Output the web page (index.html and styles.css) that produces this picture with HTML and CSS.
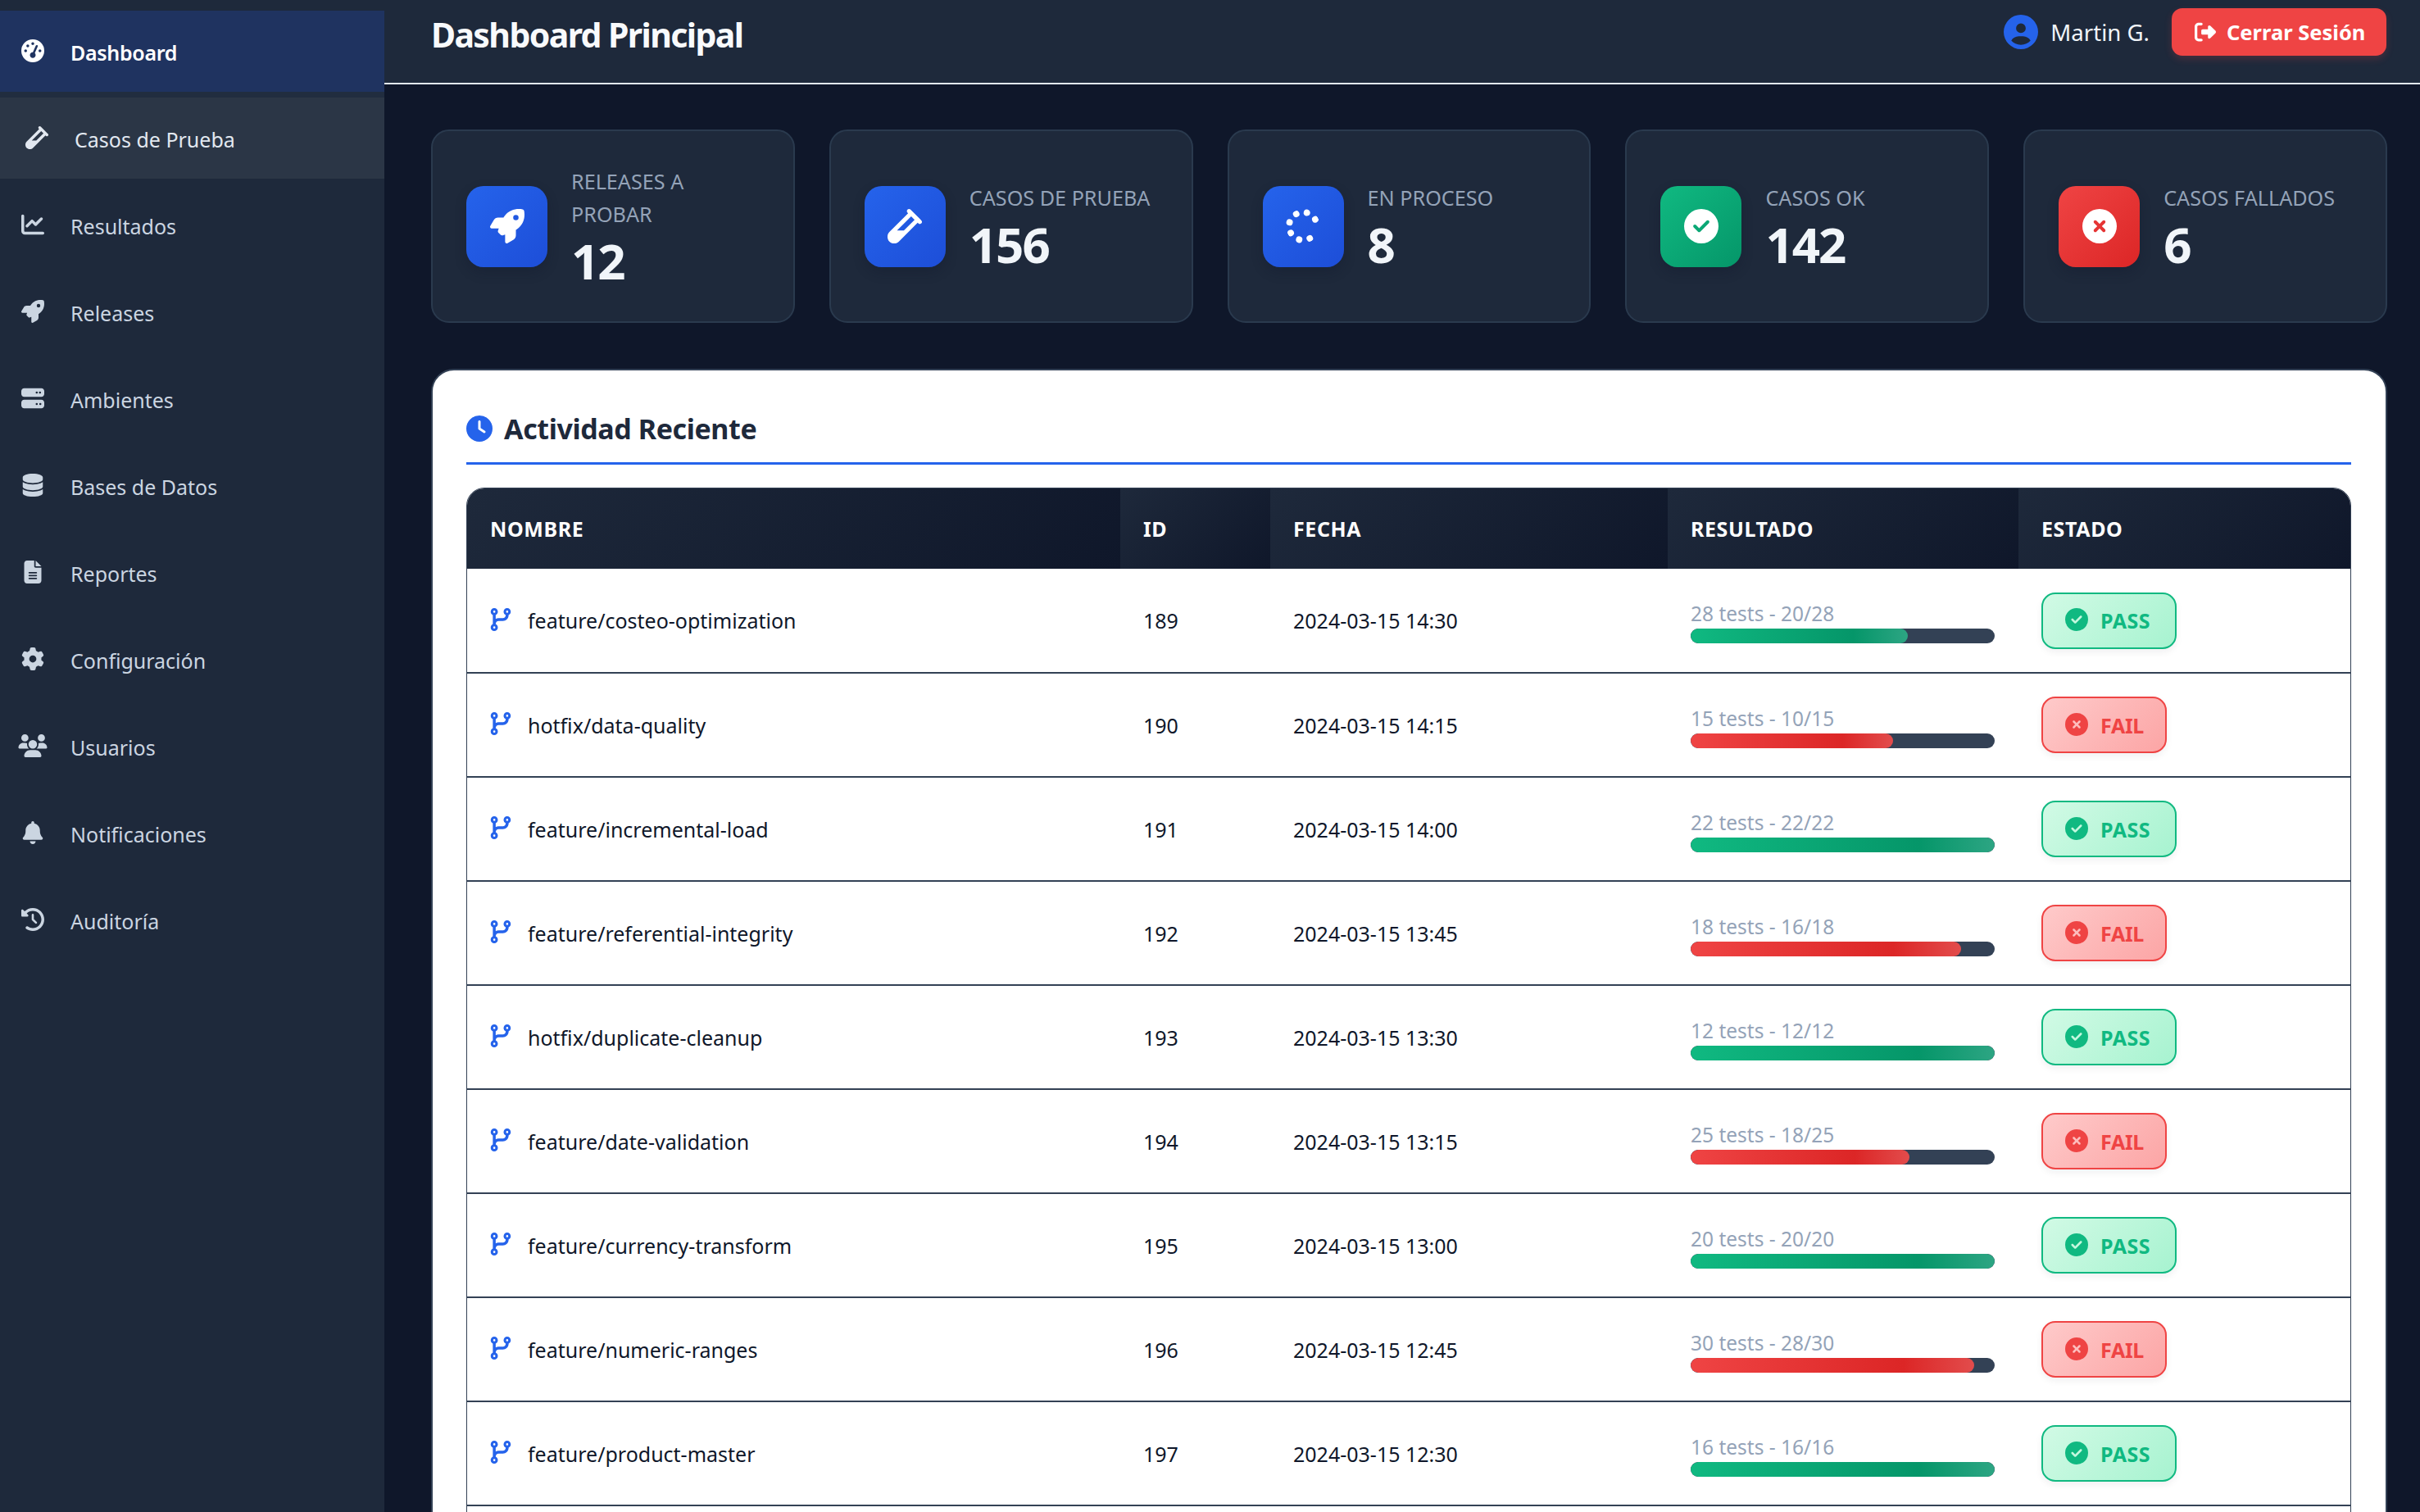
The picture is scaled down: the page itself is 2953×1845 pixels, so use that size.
FILE: index.html
```html
<!DOCTYPE html>
<html lang="es">
<head>
	<meta charset="utf-8">
	<title>Dashboard Principal</title>
	<link rel="stylesheet" href="styles.css">
</head>
<body>
	<svg class="sprite" xmlns="http://www.w3.org/2000/svg">
		<symbol id="i-gauge" viewBox="0 0 512 512"><path d="M0 256a256 256 0 1 1 512 0A256 256 0 1 1 0 256zM288 96a32 32 0 1 0 -64 0 32 32 0 1 0 64 0zM256 416c35.3 0 64-28.7 64-64c0-17.4-6.9-33.1-18.1-44.6L366 161.7c5.3-12.1-.2-26.3-12.3-31.6s-26.3 .2-31.6 12.3L257.9 288c-.6 0-1.3 0-1.9 0c-35.3 0-64 28.7-64 64s28.7 64 64 64zM176 144a32 32 0 1 0 -64 0 32 32 0 1 0 64 0zM96 288a32 32 0 1 0 0-64 32 32 0 1 0 0 64zm352-32a32 32 0 1 0 -64 0 32 32 0 1 0 64 0z"/></symbol>
		<symbol id="i-vial" viewBox="0 0 512 512"><path fill-rule="evenodd" d="M342.6 9.4c-12.5-12.5-32.8-12.5-45.3 0s-12.5 32.8 0 45.3l9.4 9.4L28.1 342.6C10.1 360.6 0 385 0 410.5V416c0 53 43 96 96 96h5.5c25.5 0 49.9-10.1 67.9-28.1L448 205.3l9.4 9.4c12.5 12.5 32.8 12.5 45.3 0s12.5-32.8 0-45.3l-16-16-144-144-16-16zM352 109.3L402.7 160l-160 160H141.3L352 109.3z"/></symbol>
		<symbol id="i-chart" viewBox="0 0 512 512"><path d="M64 64c0-17.7-14.3-32-32-32S0 46.3 0 64V400c0 44.2 35.8 80 80 80H480c17.7 0 32-14.3 32-32s-14.3-32-32-32H80c-8.8 0-16-7.2-16-16V64zm406.6 86.6c12.5-12.5 12.5-32.8 0-45.3s-32.8-12.5-45.3 0L320 210.7l-57.4-57.4c-12.5-12.5-32.8-12.5-45.3 0l-112 112c-12.5 12.5-12.5 32.8 0 45.3s32.8 12.5 45.3 0L240 221.3l57.4 57.4c12.5 12.5 32.8 12.5 45.3 0l128-128z"/></symbol>
		<symbol id="i-rocket" viewBox="0 0 512 512"><path d="M156.6 384.9L125.7 354c-8.5-8.5-11.5-20.8-7.7-32.2c3-8.9 7-20.5 11.8-33.8L24 288c-8.6 0-16.6-4.6-20.9-12.1s-4.2-16.7 .2-24.1l52.5-88.5c13-21.9 36.5-35.3 61.9-35.3l82.3 0c2.4-4 4.8-7.7 7.2-11.3C289.1-4.1 411.1-8.1 483.9 5.3c11.6 2.1 20.6 11.2 22.8 22.8c13.4 72.9 9.3 194.8-111.4 276.7c-3.5 2.4-7.3 4.8-11.3 7.2v82.3c0 25.4-13.4 49-35.3 61.9l-88.5 52.5c-7.4 4.4-16.6 4.5-24.1 .2s-12.1-12.2-12.1-20.9V380.8c-14.1 4.9-26.4 8.9-35.7 11.9c-11.2 3.6-23.4 .5-31.8-7.8zM384 168a40 40 0 1 0 0-80 40 40 0 1 0 0 80z"/></symbol>
		<symbol id="i-server" viewBox="0 0 512 512"><path d="M64 32C28.7 32 0 60.7 0 96v64c0 35.3 28.7 64 64 64H448c35.3 0 64-28.7 64-64V96c0-35.3-28.7-64-64-64H64zm280 72a24 24 0 1 1 0 48 24 24 0 1 1 0-48zm48 24a24 24 0 1 1 48 0 24 24 0 1 1 -48 0zM64 288c-35.3 0-64 28.7-64 64v64c0 35.3 28.7 64 64 64H448c35.3 0 64-28.7 64-64V352c0-35.3-28.7-64-64-64H64zm280 72a24 24 0 1 1 0 48 24 24 0 1 1 0-48zm56 24a24 24 0 1 1 48 0 24 24 0 1 1 -48 0z"/></symbol>
		<symbol id="i-database" viewBox="0 0 448 512"><path d="M448 80v48c0 44.2-100.3 80-224 80S0 172.2 0 128V80C0 35.8 100.3 0 224 0S448 35.8 448 80zM393.2 214.7c20.8-7.4 39.9-16.9 54.8-28.6V288c0 44.2-100.3 80-224 80S0 332.2 0 288V186.1c14.9 11.8 34 21.2 54.8 28.6C99.7 230.7 159.5 240 224 240s124.3-9.3 169.2-25.3zM0 346.1c14.9 11.8 34 21.2 54.8 28.6C99.7 390.7 159.5 400 224 400s124.3-9.3 169.2-25.3c20.8-7.4 39.9-16.9 54.8-28.6V432c0 44.2-100.3 80-224 80S0 476.2 0 432V346.1z"/></symbol>
		<symbol id="i-file" viewBox="0 0 384 512"><path d="M64 0C28.7 0 0 28.7 0 64V448c0 35.3 28.7 64 64 64H320c35.3 0 64-28.7 64-64V160H256c-17.7 0-32-14.3-32-32V0H64zM256 0V128H384L256 0zM112 256H272c8.8 0 16 7.2 16 16s-7.2 16-16 16H112c-8.8 0-16-7.2-16-16s7.2-16 16-16zm0 64H272c8.8 0 16 7.2 16 16s-7.2 16-16 16H112c-8.8 0-16-7.2-16-16s7.2-16 16-16zm0 64H272c8.8 0 16 7.2 16 16s-7.2 16-16 16H112c-8.8 0-16-7.2-16-16s7.2-16 16-16z"/></symbol>
		<symbol id="i-gear" viewBox="0 0 512 512"><path d="M495.9 166.6c3.2 8.7 .5 18.4-6.4 24.6l-43.3 39.4c1.1 8.3 1.7 16.8 1.7 25.4s-.6 17.1-1.7 25.4l43.3 39.4c6.9 6.2 9.6 15.9 6.4 24.6c-4.4 11.9-9.7 23.3-15.8 34.3l-4.7 8.1c-6.6 11-14 21.4-22.1 31.2c-5.9 7.2-15.7 9.6-24.5 6.8l-55.7-17.7c-13.4 10.3-28.2 18.9-44 25.4l-12.5 57.1c-2 9.1-9 16.3-18.2 17.8c-13.8 2.3-28 3.5-42.5 3.5s-28.7-1.2-42.5-3.5c-9.2-1.5-16.2-8.7-18.2-17.8l-12.5-57.1c-15.8-6.5-30.6-15.1-44-25.4L83.1 425.9c-8.8 2.8-18.6 .3-24.5-6.8c-8.1-9.8-15.5-20.2-22.1-31.2l-4.7-8.1c-6.1-11-11.4-22.4-15.8-34.3c-3.2-8.7-.5-18.4 6.4-24.6l43.3-39.4C64.6 273.1 64 264.6 64 256s.6-17.1 1.7-25.4L22.4 191.2c-6.9-6.2-9.6-15.9-6.4-24.6c4.4-11.9 9.7-23.3 15.8-34.3l4.7-8.1c6.6-11 14-21.4 22.1-31.2c5.9-7.2 15.7-9.6 24.5-6.8l55.7 17.7c13.4-10.3 28.2-18.9 44-25.4l12.5-57.1c2-9.1 9-16.3 18.2-17.8C227.3 1.2 241.5 0 256 0s28.7 1.2 42.5 3.5c9.2 1.5 16.2 8.7 18.2 17.8l12.5 57.1c15.8 6.5 30.6 15.1 44 25.4l55.7-17.7c8.8-2.8 18.6-.3 24.5 6.8c8.1 9.8 15.5 20.2 22.1 31.2l4.7 8.1c6.1 11 11.4 22.4 15.8 34.3zM256 336a80 80 0 1 0 0-160 80 80 0 1 0 0 160z"/></symbol>
		<symbol id="i-users" viewBox="0 0 640 512"><path d="M144 0a80 80 0 1 1 0 160A80 80 0 1 1 144 0zM512 0a80 80 0 1 1 0 160A80 80 0 1 1 512 0zM0 298.7C0 239.8 47.8 192 106.7 192h42.7c15.9 0 31 3.5 44.6 9.7c-1.3 7.2-1.9 14.7-1.9 22.3c0 38.2 16.8 72.5 43.3 96c-.2 0-.4 0-.7 0H21.3C9.6 320 0 310.4 0 298.7zM405.3 320c-.2 0-.4 0-.7 0c26.6-23.5 43.3-57.8 43.3-96c0-7.6-.7-15-1.9-22.3c13.6-6.3 28.7-9.7 44.6-9.7h42.7C592.2 192 640 239.8 640 298.7c0 11.8-9.6 21.3-21.3 21.3H405.3zM224 224a96 96 0 1 1 192 0 96 96 0 1 1 -192 0zM128 485.3C128 411.7 187.7 352 261.3 352H378.7C452.3 352 512 411.7 512 485.3c0 14.7-11.9 26.7-26.7 26.7H154.7c-14.7 0-26.7-11.9-26.7-26.7z"/></symbol>
		<symbol id="i-bell" viewBox="0 0 448 512"><path d="M224 0c-17.7 0-32 14.3-32 32V51.2C119 66 64 130.6 64 208v18.8c0 47-17.3 92.4-48.5 127.6l-7.4 8.3c-8.4 9.4-10.4 22.9-5.3 34.4S19.4 416 32 416H416c12.6 0 24-7.4 29.2-18.9s3.1-25-5.3-34.4l-7.4-8.3C401.3 319.2 384 273.9 384 226.8V208c0-77.4-55-142-128-156.8V32c0-17.7-14.3-32-32-32zm45.3 493.3c12-12 18.7-28.3 18.7-45.3H224 160c0 17 6.7 33.3 18.7 45.3s28.3 18.7 45.3 18.7s33.3-6.7 45.3-18.7z"/></symbol>
		<symbol id="i-history" viewBox="0 0 512 512"><path d="M75 75L41 41C25.9 25.9 0 36.6 0 57.9V168c0 13.3 10.7 24 24 24H134.1c21.4 0 32.1-25.9 17-41l-30.8-30.8C155 85.5 203 64 256 64c106 0 192 86 192 192s-86 192-192 192c-40.8 0-78.6-12.7-109.7-34.4c-14.5-10.1-34.4-6.6-44.6 7.9s-6.6 34.4 7.9 44.6C151.2 495 201.7 512 256 512c141.4 0 256-114.6 256-256S397.4 0 256 0C185.3 0 121.3 28.7 75 75zm181 53c-13.3 0-24 10.7-24 24V256c0 6.4 2.5 12.5 7 17l72 72c9.4 9.4 24.6 9.4 33.9 0s9.4-24.6 0-33.9l-65-65V152c0-13.3-10.7-24-24-24z"/></symbol>
		<symbol id="i-spinner" viewBox="0 0 512 512"><path d="M304 48a48 48 0 1 0 -96 0 48 48 0 1 0 96 0zm0 416a48 48 0 1 0 -96 0 48 48 0 1 0 96 0zM48 304a48 48 0 1 0 0-96 48 48 0 1 0 0 96zm464-48a48 48 0 1 0 -96 0 48 48 0 1 0 96 0zM142.9 437A48 48 0 1 0 75 369.1 48 48 0 1 0 142.9 437zm0-294.2A48 48 0 1 0 75 75a48 48 0 1 0 67.9 67.9zM369.1 437A48 48 0 1 0 437 369.1 48 48 0 1 0 369.1 437z"/></symbol>
		<symbol id="i-check" viewBox="0 0 512 512"><path d="M256 512A256 256 0 1 0 256 0a256 256 0 1 0 0 512zM369 209L241 337c-9.4 9.4-24.6 9.4-33.9 0l-64-64c-9.4-9.4-9.4-24.6 0-33.9s24.6-9.4 33.9 0l47 47L335 175c9.4-9.4 24.6-9.4 33.9 0s9.4 24.6 0 33.9z"/></symbol>
		<symbol id="i-xmark" viewBox="0 0 512 512"><path d="M256 512A256 256 0 1 0 256 0a256 256 0 1 0 0 512zM175 175c9.4-9.4 24.6-9.4 33.9 0l47 47 47-47c9.4-9.4 24.6-9.4 33.9 0s9.4 24.6 0 33.9l-47 47 47 47c9.4 9.4 9.4 24.6 0 33.9s-24.6 9.4-33.9 0l-47-47-47 47c-9.4 9.4-24.6 9.4-33.9 0s-9.4-24.6 0-33.9l47-47-47-47c-9.4-9.4-9.4-24.6 0-33.9z"/></symbol>
		<symbol id="i-user" viewBox="0 0 512 512"><path d="M399 384.2C376.9 345.8 335.4 320 288 320H224c-47.4 0-88.9 25.8-111 64.2c35.2 39.2 86.2 63.8 143 63.8s107.8-24.7 143-63.8zM0 256a256 256 0 1 1 512 0A256 256 0 1 1 0 256zm256 16a72 72 0 1 0 0-144 72 72 0 1 0 0 144z"/></symbol>
		<symbol id="i-clock" viewBox="0 0 512 512"><path d="M256 0a256 256 0 1 1 0 512A256 256 0 1 1 256 0zM232 120V256c0 8 4 15.5 10.7 20l96 64c11 7.4 25.9 4.4 33.3-6.7s4.4-25.9-6.7-33.3L280 243.2V120c0-13.3-10.7-24-24-24s-24 10.7-24 24z"/></symbol>
		<symbol id="i-branch" viewBox="0 0 448 512"><path d="M80 104a24 24 0 1 0 0-48 24 24 0 1 0 0 48zm80-24c0 32.8-19.7 61-48 73.3v87.8c18.8-10.9 40.7-17.1 64-17.1h96c35.3 0 64-28.7 64-64v-6.7C307.7 141 288 112.8 288 80c0-44.2 35.8-80 80-80s80 35.8 80 80c0 32.8-19.7 61-48 73.3V160c0 70.7-57.3 128-128 128H176c-35.3 0-64 28.7-64 64v6.7c28.3 12.3 48 40.5 48 73.3c0 44.2-35.8 80-80 80s-80-35.8-80-80c0-32.8 19.7-61 48-73.3V352 153.3C19.7 141 0 112.8 0 80C0 35.8 35.8 0 80 0s80 35.8 80 80zm232 0a24 24 0 1 0 -48 0 24 24 0 1 0 48 0zM80 456a24 24 0 1 0 0-48 24 24 0 1 0 0 48z"/></symbol>
		<symbol id="i-logout" viewBox="0 0 512 512"><path d="M377.9 105.9L500.7 228.7c7.2 7.2 11.3 17.1 11.3 27.3s-4.1 20.1-11.3 27.3L377.9 406.1c-6.4 6.4-15 9.9-24 9.9c-18.7 0-33.9-15.2-33.9-33.9l0-62.1-128 0c-17.7 0-32-14.3-32-32l0-64c0-17.7 14.3-32 32-32l128 0 0-62.1c0-18.7 15.2-33.9 33.9-33.9c9 0 17.6 3.6 24 9.9zM160 96L96 96c-17.7 0-32 14.3-32 32l0 256c0 17.7 14.3 32 32 32l64 0c17.7 0 32 14.3 32 32s-14.3 32-32 32l-64 0c-53 0-96-43-96-96L0 128C0 75 43 32 96 32l64 0c17.7 0 32 14.3 32 32s-14.3 32-32 32z"/></symbol>
	</svg>

	<aside class="sidebar">
		<a class="nav-item active"><span class="nav-icon"><svg><use href="#i-gauge"/></svg></span>Dashboard</a>
		<a class="nav-item hover"><span class="nav-icon"><svg><use href="#i-vial"/></svg></span>Casos de Prueba</a>
		<a class="nav-item"><span class="nav-icon"><svg><use href="#i-chart"/></svg></span>Resultados</a>
		<a class="nav-item"><span class="nav-icon"><svg><use href="#i-rocket"/></svg></span>Releases</a>
		<a class="nav-item"><span class="nav-icon"><svg><use href="#i-server"/></svg></span>Ambientes</a>
		<a class="nav-item"><span class="nav-icon"><svg><use href="#i-database"/></svg></span>Bases de Datos</a>
		<a class="nav-item"><span class="nav-icon"><svg><use href="#i-file"/></svg></span>Reportes</a>
		<a class="nav-item"><span class="nav-icon"><svg><use href="#i-gear"/></svg></span>Configuración</a>
		<a class="nav-item"><span class="nav-icon"><svg><use href="#i-users"/></svg></span>Usuarios</a>
		<a class="nav-item"><span class="nav-icon"><svg><use href="#i-bell"/></svg></span>Notificaciones</a>
		<a class="nav-item"><span class="nav-icon"><svg><use href="#i-history"/></svg></span>Auditoría</a>
	</aside>

	<div class="main">
		<header class="topbar">
			<h1>Dashboard Principal</h1>
			<div class="user-box">
				<svg class="user-icon"><use href="#i-user"/></svg>
				<span class="user-name">Martin G.</span>
				<button class="logout"><svg><use href="#i-logout"/></svg>Cerrar Sesión</button>
			</div>
		</header>

		<div class="content">
			<section class="stats">
				<div class="stat">
					<div class="stat-icon blue"><svg><use href="#i-rocket"/></svg></div>
					<div class="stat-text"><div class="stat-label">Releases a probar</div><div class="stat-num">12</div></div>
				</div>
				<div class="stat">
					<div class="stat-icon blue"><svg><use href="#i-vial"/></svg></div>
					<div class="stat-text"><div class="stat-label">Casos de Prueba</div><div class="stat-num">156</div></div>
				</div>
				<div class="stat">
					<div class="stat-icon blue"><svg class="spin"><use href="#i-spinner"/></svg></div>
					<div class="stat-text"><div class="stat-label">En Proceso</div><div class="stat-num">8</div></div>
				</div>
				<div class="stat">
					<div class="stat-icon green"><svg><use href="#i-check"/></svg></div>
					<div class="stat-text"><div class="stat-label">Casos OK</div><div class="stat-num">142</div></div>
				</div>
				<div class="stat">
					<div class="stat-icon red"><svg><use href="#i-xmark"/></svg></div>
					<div class="stat-text"><div class="stat-label">Casos Fallados</div><div class="stat-num">6</div></div>
				</div>
			</section>

			<section class="panel">
				<h2 class="panel-title"><svg><use href="#i-clock"/></svg>Actividad Reciente</h2>
				<div class="table-wrap">
					<table>
						<colgroup>
							<col class="c-name"><col class="c-id"><col class="c-date"><col class="c-res"><col>
						</colgroup>
						<thead>
							<tr><th>Nombre</th><th>ID</th><th>Fecha</th><th>Resultado</th><th>Estado</th></tr>
						</thead>
						<tbody>
							<tr>
								<td><div class="branch"><svg><use href="#i-branch"/></svg>feature/costeo-optimization</div></td><td>189</td><td>2024-03-15 14:30</td>
								<td><div class="res-text">28 tests - 20/28</div><div class="bar"><div class="fill ok" style="width:71.4%"></div></div></td>
								<td><span class="badge pass"><svg><use href="#i-check"/></svg>PASS</span></td>
							</tr>
							<tr>
								<td><div class="branch"><svg><use href="#i-branch"/></svg>hotfix/data-quality</div></td><td>190</td><td>2024-03-15 14:15</td>
								<td><div class="res-text">15 tests - 10/15</div><div class="bar"><div class="fill bad" style="width:66.7%"></div></div></td>
								<td><span class="badge fail"><svg><use href="#i-xmark"/></svg>FAIL</span></td>
							</tr>
							<tr>
								<td><div class="branch"><svg><use href="#i-branch"/></svg>feature/incremental-load</div></td><td>191</td><td>2024-03-15 14:00</td>
								<td><div class="res-text">22 tests - 22/22</div><div class="bar"><div class="fill ok" style="width:100%"></div></div></td>
								<td><span class="badge pass"><svg><use href="#i-check"/></svg>PASS</span></td>
							</tr>
							<tr>
								<td><div class="branch"><svg><use href="#i-branch"/></svg>feature/referential-integrity</div></td><td>192</td><td>2024-03-15 13:45</td>
								<td><div class="res-text">18 tests - 16/18</div><div class="bar"><div class="fill bad" style="width:88.9%"></div></div></td>
								<td><span class="badge fail"><svg><use href="#i-xmark"/></svg>FAIL</span></td>
							</tr>
							<tr>
								<td><div class="branch"><svg><use href="#i-branch"/></svg>hotfix/duplicate-cleanup</div></td><td>193</td><td>2024-03-15 13:30</td>
								<td><div class="res-text">12 tests - 12/12</div><div class="bar"><div class="fill ok" style="width:100%"></div></div></td>
								<td><span class="badge pass"><svg><use href="#i-check"/></svg>PASS</span></td>
							</tr>
							<tr>
								<td><div class="branch"><svg><use href="#i-branch"/></svg>feature/date-validation</div></td><td>194</td><td>2024-03-15 13:15</td>
								<td><div class="res-text">25 tests - 18/25</div><div class="bar"><div class="fill bad" style="width:72%"></div></div></td>
								<td><span class="badge fail"><svg><use href="#i-xmark"/></svg>FAIL</span></td>
							</tr>
							<tr>
								<td><div class="branch"><svg><use href="#i-branch"/></svg>feature/currency-transform</div></td><td>195</td><td>2024-03-15 13:00</td>
								<td><div class="res-text">20 tests - 20/20</div><div class="bar"><div class="fill ok" style="width:100%"></div></div></td>
								<td><span class="badge pass"><svg><use href="#i-check"/></svg>PASS</span></td>
							</tr>
							<tr>
								<td><div class="branch"><svg><use href="#i-branch"/></svg>feature/numeric-ranges</div></td><td>196</td><td>2024-03-15 12:45</td>
								<td><div class="res-text">30 tests - 28/30</div><div class="bar"><div class="fill bad" style="width:93.3%"></div></div></td>
								<td><span class="badge fail"><svg><use href="#i-xmark"/></svg>FAIL</span></td>
							</tr>
							<tr>
								<td><div class="branch"><svg><use href="#i-branch"/></svg>feature/product-master</div></td><td>197</td><td>2024-03-15 12:30</td>
								<td><div class="res-text">16 tests - 16/16</div><div class="bar"><div class="fill ok" style="width:100%"></div></div></td>
								<td><span class="badge pass"><svg><use href="#i-check"/></svg>PASS</span></td>
							</tr>
							<tr><td></td><td></td><td></td><td></td><td></td></tr>
						</tbody>
					</table>
				</div>
			</section>
		</div>
	</div>
</body>
</html>
```

FILE: styles.css
```css
* {
	box-sizing: border-box;
}
html, body {
	height: 100%;
}
body {
	margin: 0;
	display: flex;
	overflow: hidden;
	font-family: "Noto Sans", "Open Sans", sans-serif;
	color: #0f172a;
	background: #0f172a;
}
svg {
	fill: currentColor;
}
.sprite {
	display: none;
}

/* sidebar */
.sidebar {
	width: 469px;
	flex: none;
	padding-top: 13px;
	background: #1e293b;
}
.nav-item {
	display: flex;
	align-items: center;
	height: 99px;
	margin-bottom: 7px;
	padding: 2px 0 0 22px;
	font-size: 25px;
	color: #cbd5e1;
}
.nav-item.active {
	color: #fff;
	font-weight: 600;
	letter-spacing: -.3px;
	background: #1f3360;
	box-shadow: 0 7px 0 #212d3f;
}
.nav-item.hover {
	padding-left: 27px;
	color: #e2e8f0;
	background: #2b3646;
}
.nav-icon {
	width: 35px;
	height: 28px;
	margin-right: 29px;
	margin-top: -4px;
	flex: none;
	display: flex;
	justify-content: center;
}
.nav-icon svg {
	width: 36px;
	height: 28px;
	flex: none;
}

/* top bar */
.main {
	flex: 1;
	min-width: 0;
}
.topbar {
	height: 103px;
	padding: 10px 41px 0 57px;
	display: flex;
	justify-content: space-between;
	background: #1e293b;
	border-bottom: 2px solid #e2e8f0;
}
.topbar h1 {
	margin: 0;
	font-size: 41px;
	font-weight: 700;
	line-height: 64px;
	letter-spacing: -1.6px;
	color: #f8fafc;
}
.user-box {
	display: flex;
	align-items: flex-start;
	height: 58px;
}
.user-icon {
	width: 42px;
	height: 42px;
	margin-top: 8px;
	color: #2563eb;
}
.user-name {
	margin-left: 15px;
	font-size: 27.6px;
	line-height: 58px;
	color: #f1f5f9;
}
.logout {
	display: flex;
	align-items: center;
	gap: 13px;
	width: 262px;
	height: 58px;
	margin-left: 27px;
	padding: 0 0 0 28px;
	border: 0;
	border-radius: 13px;
	font: 700 25.5px "Noto Sans", sans-serif;
	color: #fff;
	background: #ef4444;
	box-shadow: 0 4px 10px rgba(239, 68, 68, .2);
}
.logout svg {
	width: 26px;
	height: 26px;
}

/* stat cards */
.content {
	padding: 55px 40px 0 57px;
}
.stats {
	display: grid;
	grid-template-columns: repeat(5, 1fr);
	gap: 42px;
}
.stat {
	display: flex;
	align-items: center;
	gap: 29px;
	height: 236px;
	padding: 0 42px 0 41px;
	background: #1e293b;
	border: 2px solid #2a3a4e;
	border-radius: 22px;
}
.stat-icon {
	width: 99px;
	height: 99px;
	flex: none;
	display: flex;
	align-items: center;
	justify-content: center;
	border-radius: 21px;
	color: #fff;
	box-shadow: 0 6px 14px rgba(15, 23, 42, .3);
}
.stat-icon svg {
	width: 42px;
	height: 42px;
}
.stat-icon.blue {
	background: linear-gradient(135deg, #2563eb, #1d4ed8);
}
.stat-icon.green {
	background: linear-gradient(135deg, #10b981, #059669);
}
.stat-icon.red {
	background: linear-gradient(135deg, #ef4444, #dc2626);
}
.spin {
	transform: rotate(61deg);
}
.stat-text {
	padding-top: 4px;
	min-width: 0;
}
.stat-label {
	font-size: 25.2px;
	line-height: 40px;
	text-transform: uppercase;
	color: #94a3b8;
}
.stat-num {
	font-size: 60px;
	font-weight: 700;
	line-height: 74px;
	letter-spacing: -2px;
	color: #f1f5f9;
}

/* recent activity */
.panel {
	margin-top: 56px;
	padding: 42px 42px 42px 41px;
	background: #fff;
	border: 2px solid #334155;
	border-radius: 28px;
}
.panel-title {
	display: flex;
	align-items: center;
	gap: 14px;
	margin: 0 0 28px;
	padding: 4px 0 16px;
	font-size: 34px;
	font-weight: 700;
	line-height: 50px;
	letter-spacing: -.4px;
	color: #1e293b;
	border-bottom: 3px solid #2563eb;
}
.panel-title svg {
	width: 32px;
	height: 32px;
	color: #2563eb;
}
.table-wrap {
	border: 1px solid #334155;
	border-radius: 22px;
	overflow: hidden;
}
table {
	width: 100%;
	table-layout: fixed;
	border-collapse: collapse;
}
.c-name {
	width: 797px;
}
.c-id {
	width: 183px;
}
.c-date {
	width: 485px;
}
.c-res {
	width: 428px;
}
th {
	height: 98px;
	padding: 0 28px;
	text-align: left;
	font-size: 25px;
	font-weight: 700;
	letter-spacing: .6px;
	text-transform: uppercase;
	color: #fff;
	background: linear-gradient(135deg, #1e293b, #0f172a);
}
td {
	height: 127px;
	padding: 0 28px;
	font-size: 25px;
	border-bottom: 2px solid #334155;
	color: #0f172a;
}
.branch {
	display: flex;
	align-items: center;
	gap: 20px;
}
.branch svg {
	width: 26px;
	height: 28px;
	flex: none;
	margin-top: -3px;
	color: #2563eb;
}
.res-text {
	margin: 5px 0 3px;
	font-size: 24.5px;
	line-height: 30px;
	color: #94a3b8;
}
.bar {
	width: 371px;
	height: 18px;
	border-radius: 9px;
	background: #334155;
	overflow: hidden;
}
.fill {
	height: 100%;
	border-radius: 9px;
}
.fill.ok {
	background: linear-gradient(90deg, #10b981, #059669 75%, #2da583);
}
.fill.bad {
	background: linear-gradient(90deg, #ef4444, #dc2626 75%, #e24c4c);
}
.badge {
	display: inline-flex;
	align-items: center;
	gap: 15px;
	height: 69px;
	padding-left: 27px;
	border-radius: 17px;
	font-size: 25px;
	font-weight: 700;
	vertical-align: middle;
	box-shadow: 0 4px 8px rgba(15, 23, 42, .06);
}
.badge svg {
	width: 28px;
	height: 28px;
	margin-top: -2px;
}
.badge.pass {
	padding-right: 30px;
	letter-spacing: .5px;
	color: #10b981;
	background: linear-gradient(135deg, #d1fae5, #a7f3d0);
	border: 2px solid #10b981;
}
.badge.fail {
	padding-right: 26px;
	letter-spacing: -.3px;
	color: #ef4444;
	background: linear-gradient(135deg, #fecaca, #fca5a5);
	border: 2px solid #ef4444;
}
```
